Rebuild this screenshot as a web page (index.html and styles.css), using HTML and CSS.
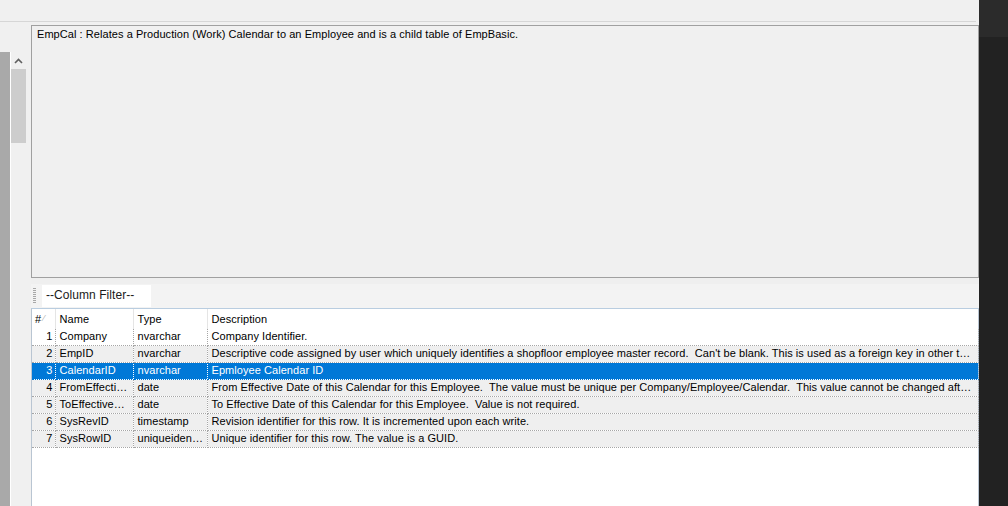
FILE: index.html
```html
<!DOCTYPE html>
<html lang="en">
<head>
  <meta charset="UTF-8" />
  <title>EmpCal</title>
  <link rel="stylesheet" href="styles.css">
</head>
<body>
  <div class="shell">
    <div class="app">
      <div class="topbar"></div>
      <div class="topline"></div>

      <div class="main">
        <div class="leftside">
          <div class="rail"></div>
          <div class="vscroll">
            <div class="arrow">
              <svg width="15" height="17" viewBox="0 0 15 17">
                <path d="M4 11 L7.5 7.5 L11 11" fill="none" stroke="#606060" stroke-width="1.6" />
              </svg>
            </div>
            <div class="thumb"></div>
          </div>
        </div>

        <div class="content">
          <div class="descbox">EmpCal : Relates a Production (Work) Calendar to an Employee and is a child table of EmpBasic.</div>

          <div class="toolstrip">
            <div class="grip"></div>
            <div class="filter">--Column Filter--</div>
          </div>

          <div class="grid">
            <table class="cols">
              <colgroup>
                <col class="c-num">
                <col class="c-name">
                <col class="c-type">
                <col class="c-desc">
              </colgroup>
              <thead>
                <tr>
                  <th class="num-h">#<span class="sort">&#8260;</span></th>
                  <th>Name</th>
                  <th>Type</th>
                  <th>Description</th>
                </tr>
              </thead>
              <tbody>
                <tr class="first">
                  <td class="num">1</td>
                  <td>Company</td>
                  <td>nvarchar</td>
                  <td>Company Identifier.</td>
                </tr>
                <tr>
                  <td class="num">2</td>
                  <td>EmpID</td>
                  <td>nvarchar</td>
                  <td>Descriptive code assigned by user which uniquely identifies a shopfloor employee master record.  Can't be blank. This is used as a foreign key in other tables.</td>
                </tr>
                <tr class="selected">
                  <td class="num">3</td>
                  <td>CalendarID</td>
                  <td>nvarchar</td>
                  <td>Epmloyee Calendar ID</td>
                </tr>
                <tr>
                  <td class="num">4</td>
                  <td>FromEffectiveDate</td>
                  <td>date</td>
                  <td>From Effective Date of this Calendar for this Employee.  The value must be unique per Company/Employee/Calendar.  This value cannot be changed after it is created.</td>
                </tr>
                <tr>
                  <td class="num">5</td>
                  <td>ToEffectiveDate</td>
                  <td>date</td>
                  <td>To Effective Date of this Calendar for this Employee.  Value is not required.</td>
                </tr>
                <tr>
                  <td class="num">6</td>
                  <td>SysRevID</td>
                  <td>timestamp</td>
                  <td>Revision identifier for this row. It is incremented upon each write.</td>
                </tr>
                <tr>
                  <td class="num">7</td>
                  <td>SysRowID</td>
                  <td>uniqueidentifier</td>
                  <td>Unique identifier for this row. The value is a GUID.</td>
                </tr>
              </tbody>
            </table>
          </div>
        </div>
      </div>
    </div>

    <div class="desktop"></div>
  </div>
</body>
</html>
```

FILE: styles.css
```css
html, body {
  margin: 0;
  padding: 0;
}

body {
  font-family: 'Liberation Sans', Arial, sans-serif;
  font-size: 11px;
  letter-spacing: 0.06px;
  color: #000;
  overflow: hidden;
}

.shell {
  display: flex;
  width: 1008px;
  height: 506px;
}

/* the window itself */
.app {
  width: 979px;
  display: flex;
  flex-direction: column;
  background: #f0f0f0;
}

/* dark desktop at the right edge */
.desktop {
  width: 29px;
  background: linear-gradient(#2b2b2b 0, #2b2b2b 37px, #222222 37px);
}

.topbar {
  height: 21px;
}

.topline {
  width: 976px;
  height: 1px;
  background: #d6d6d6;
  margin-bottom: 3px;
}

.main {
  flex: 1;
  display: flex;
  min-height: 0;
}

/* left edge: dark rail + scrollbar piece */
.leftside {
  width: 31px;
  display: flex;
  padding-top: 27px;
  box-sizing: border-box;
}

.rail {
  width: 10px;
  background: #a9a9a9;
  border-right: 1px solid #fff;
}

.vscroll {
  width: 15px;
}

.arrow {
  height: 17px;
}

.arrow svg {
  display: block;
}

.thumb {
  height: 74px;
  background: #cdcdcd;
}

.content {
  width: 948px;
  display: flex;
  flex-direction: column;
}

.descbox {
  height: 253px;
  box-sizing: border-box;
  border: 1px solid #a0a0a0;
  background: #f0f0f0;
  padding: 2px 5px;
  line-height: 13px;
}

.toolstrip {
  height: 30px;
  box-sizing: border-box;
  padding-top: 7px;
  background: linear-gradient(#efefef 0, #efefef 6px, #f3f3f3 6px);
  display: flex;
  align-items: flex-start;
}

.grip {
  width: 3px;
  height: 16px;
  margin: 3px 6px 0 2px;
  background: repeating-linear-gradient(#a8a8a8 0, #a8a8a8 1px, transparent 1px, transparent 2px);
}

.filter {
  width: 109px;
  height: 22px;
  box-sizing: border-box;
  background: #fff;
  padding-left: 4px;
  line-height: 21px;
  font-size: 12px;
  color: #1a1a1a;
}

.grid {
  flex: 1;
  background: #fff;
  border-top: 1px solid #b9cde0;
  border-left: 1px solid #b9c5d2;
  border-right: 1px solid #b9c5d2;
}

.cols {
  border-collapse: collapse;
  table-layout: fixed;
  width: 946px;
}

.c-num { width: 23px; }
.c-name { width: 78px; }
.c-type { width: 74px; }
.c-desc { width: 771px; }

th, td {
  padding: 0 1px 0 4px;
  text-align: left;
  font-weight: normal;
  white-space: pre;
  overflow: hidden;
  text-overflow: ellipsis;
}

th {
  height: 19px;
  line-height: 19px;
  border-right: 1px solid #e5e5e5;
}

th:last-child {
  border-right: none;
}

th.num-h {
  padding-left: 3px;
  padding-right: 0;
}

.sort {
  color: #b0b0b0;
  font-size: 9px;
  margin-left: 2px;
  vertical-align: 2px;
}

td {
  height: 16px;
  line-height: 15px;
  padding-bottom: 1px;
  box-sizing: border-box;
  background: #efefef;
  border-right: 1px dotted #a6a6a6;
  border-bottom: 1px dotted #a6a6a6;
}

tr.first td {
  background: #fff;
}

td.num {
  text-align: right;
  padding: 0 2px 1px 0;
}

tr.selected td {
  background: #0078d7;
  color: #fff;
  border-color: #0078d7;
}

tr.selected td:last-child {
  border-right: 1px dotted #7aaedd;
}
```
